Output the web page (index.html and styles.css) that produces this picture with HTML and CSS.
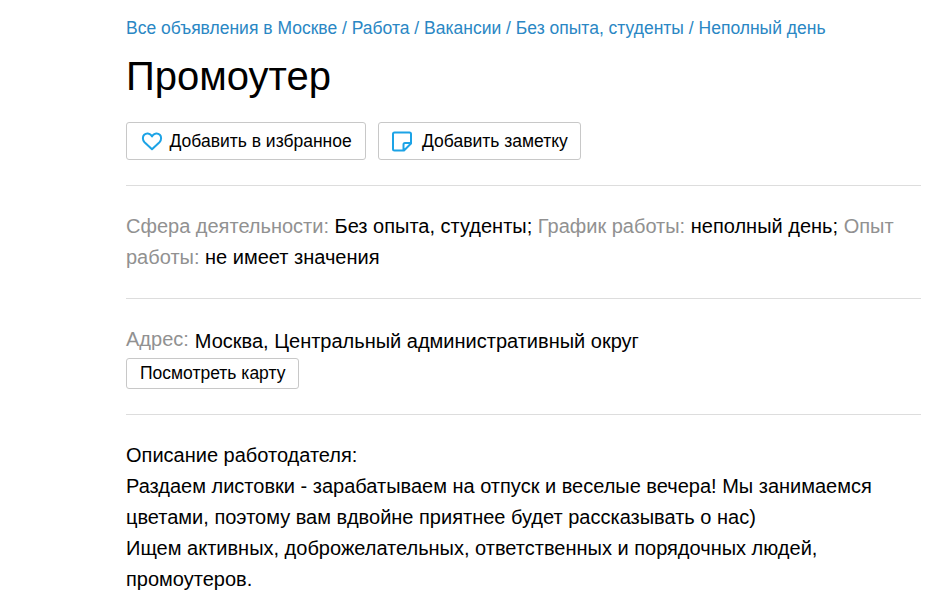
FILE: index.html
```html
<!DOCTYPE html>
<html lang="ru">
<head>
<meta charset="utf-8">
<title>Промоутер</title>
<link rel="stylesheet" href="styles.css">
</head>
<body>
<main class="page">
  <nav class="crumbs"><a>Все объявления в Москве</a> / <a>Работа</a> / <a>Вакансии</a> / <a>Без опыта, студенты</a> / <a>Неполный день</a></nav>
  <h1 class="title">Промоутер</h1>
  <div class="actions">
    <button class="btn btn-fav">
      <svg class="icon" width="22" height="20" viewBox="0 0 22 20"><path d="M11 18.300L3.500 11.200C1.300 9 1.500 5.500 3.200 3.800C5.300 1.700 8.600 2.200 10.100 4.200L11 5.500L11.900 4.200C13.400 2.200 16.700 1.700 18.800 3.800C20.500 5.500 20.700 9 18.500 11.200Z"/></svg>
      <span>Добавить в избранное</span>
    </button>
    <button class="btn btn-note">
      <svg class="icon" width="22" height="22" viewBox="0 0 22 22"><path d="M3.500 2.500H18.500Q20 2.500 20 4V13.500L13 20.500H3.500Q2 20.500 2 19V4Q2 2.500 3.500 2.500ZM12.500 20.500V14.500Q12.500 13 14 13H20"/></svg>
      <span>Добавить заметку</span>
    </button>
  </div>
  <section class="params"><span class="label">Сфера деятельности:</span> Без опыта, студенты; <span class="label">График работы:</span> неполный день; <span class="label">Опыт<br>работы:</span> не имеет значения</section>
  <section class="address">
    <div class="address-line"><span class="label">Адрес:</span><span class="place">Москва, Центральный административный округ</span></div>
    <button class="btn btn-map"><span>Посмотреть карту</span></button>
  </section>
  <section class="description">
    <p>Описание работодателя:</p>
    <p>Раздаем листовки - зарабатываем на отпуск и веселые вечера! Мы занимаемся</p>
    <p>цветами, поэтому вам вдвойне приятнее будет рассказывать о нас)</p>
    <p>Ищем активных, доброжелательных, ответственных и порядочных людей,</p>
    <p>промоутеров.</p>
  </section>
</main>
</body>
</html>
```
FILE: styles.css
```css
* { box-sizing: border-box; }
body { margin: 0; background: #fff; color: #000; font-family: "Liberation Sans", Arial, sans-serif; overflow: hidden; }
.page { width: 795px; margin-left: 126px; padding-top: 16px; white-space: nowrap; }
.crumbs { height: 24px; line-height: 24px; font-size: 17.5px; color: #2a87c4; }
.title { margin: 11px 0 0; height: 50px; line-height: 50px; font-size: 40px; font-weight: 400; }
.actions { display: flex; gap: 12px; margin-top: 21px; }
.btn { display: flex; align-items: center; height: 38px; padding: 0; background: #fff; border: 1px solid #c8c8c8; border-radius: 3px; font: 17.5px "Liberation Sans", Arial, sans-serif; color: #000; white-space: nowrap; }
.btn-fav { width: 240px; padding-left: 14px; gap: 6.5px; }
.btn-note { width: 203px; padding-left: 12px; gap: 9px; }
.btn-map { width: 173px; height: 31px; padding-left: 13px; }
.icon { flex: none; fill: none; stroke: #1ca3e6; stroke-width: 2; stroke-linejoin: round; }
.params { margin-top: 25px; height: 113px; padding-top: 25px; border-top: 1px solid #ddd; font-size: 20px; line-height: 31px; }
.label { color: #919191; }
.address { height: 116px; padding-top: 25px; border-top: 1px solid #ddd; font-size: 20px; }
.address-line { display: flex; gap: 6px; height: 34px; line-height: 31px; }
.place { padding-top: 2px; }
.description { border-top: 1px solid #ddd; padding-top: 25px; font-size: 20px; line-height: 31px; }
.description p { margin: 0; }
```
